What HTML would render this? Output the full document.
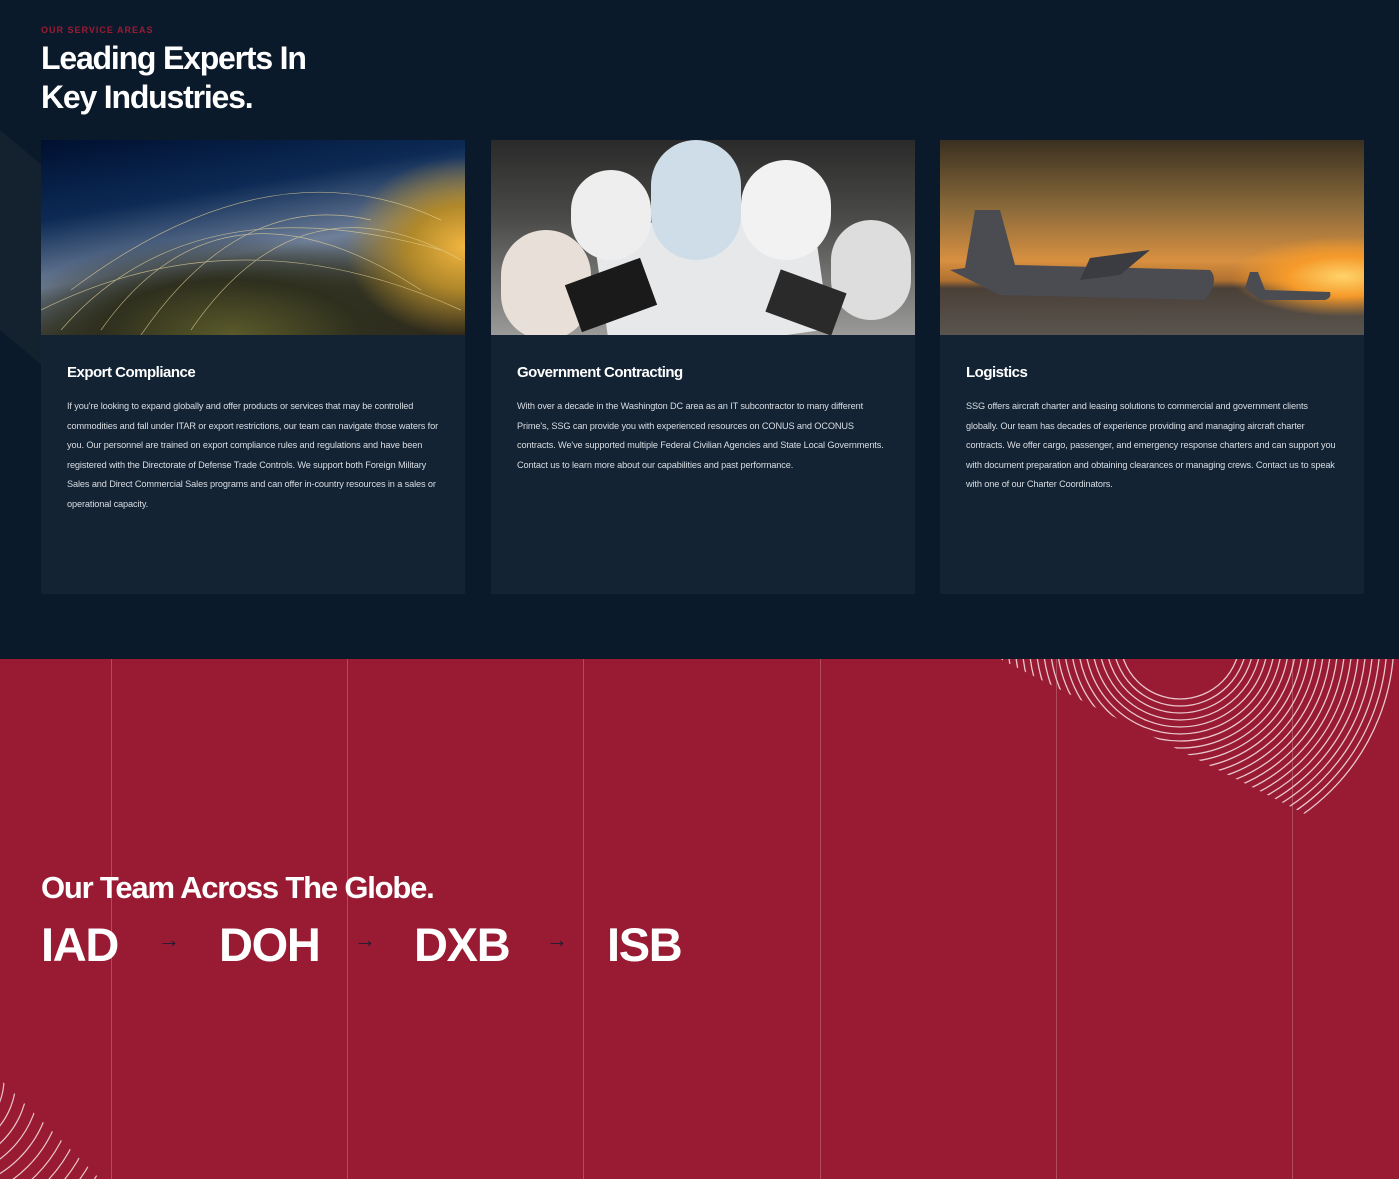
<!DOCTYPE html>
<html><head><meta charset="utf-8"><style>
*{margin:0;padding:0;box-sizing:border-box}
html,body{width:1399px;height:1179px;overflow:hidden}
body{background:#0b1a2b;font-family:"Liberation Sans",sans-serif;position:relative}
.top{position:absolute;left:0;top:0;width:1399px;height:659px;background:#0b1a2b;overflow:hidden}
.tri{position:absolute;left:-60px;top:130px;width:120px;height:200px;background:#15242f;transform:skewY(40deg);opacity:.8}
.eyebrow{position:absolute;left:41px;top:25px;color:#9b1b33;font-size:9px;letter-spacing:1px;font-weight:bold}
h1{position:absolute;left:41px;top:39px;color:#fff;font-size:32px;line-height:39px;font-weight:bold;letter-spacing:-1.2px}
.card{position:absolute;top:140px;width:424px;height:454px;background:#132334}
.img{height:195px;position:relative;overflow:hidden}
.card h3{position:absolute;left:26px;top:224px;color:#fff;font-size:15px;font-weight:bold;letter-spacing:-.5px}
.card p{position:absolute;left:26px;top:257px;width:372px;color:#d9dde3;font-size:9.2px;line-height:19.5px;letter-spacing:-.12px}
.red{position:absolute;left:0;top:659px;width:1399px;height:520px;background:#991b33;overflow:hidden}
.vl{position:absolute;top:0;width:1px;height:520px;background:rgba(255,255,255,.22)}
.h2{position:absolute;left:41px;top:211px;color:#fff;font-size:31px;font-weight:bold;letter-spacing:-1.2px}
.code{position:absolute;top:258px;color:#fff;font-size:47px;font-weight:bold;letter-spacing:-1.3px}
.arr{position:absolute;top:268px;color:#1a1f33;font-size:22px}
</style></head><body>
<div class="top">
<div class="tri"></div>
<div class="eyebrow">OUR SERVICE AREAS</div>
<h1>Leading Experts In<br>Key Industries.</h1>

<div class="card" style="left:41px">
<div class="img" style="background:radial-gradient(ellipse 160px 120px at 100% 55%,#f2b640 0%,#b0882a 35%,transparent 75%),radial-gradient(ellipse 260px 110px at 45% 100%,#5a5a2a 0%,#2e2f1e 50%,transparent 90%),linear-gradient(170deg,#001030 0%,#0c2a55 30%,#6f7f98 55%,#3a3a2a 75%,#2a2418 100%)">
<svg width="424" height="195" style="position:absolute;left:0;top:0"><g fill="none" stroke="#e9d79a" stroke-width=".7" opacity=".7"><path d="M20 190 Q150 40 400 110"/><path d="M60 190 Q180 20 380 150"/><path d="M100 195 Q200 50 330 80"/><path d="M0 170 Q200 70 420 170"/><path d="M150 190 Q260 30 420 120"/><path d="M30 150 Q230 0 400 80"/></g></svg>
</div>
<h3>Export Compliance</h3>
<p>If you're looking to expand globally and offer products or services that may be controlled commodities and fall under ITAR or export restrictions, our team can navigate those waters for you. Our personnel are trained on export compliance rules and regulations and have been registered with the Directorate of Defense Trade Controls. We support both Foreign Military Sales and Direct Commercial Sales programs and can offer in-country resources in a sales or operational capacity.</p>
</div>

<div class="card" style="left:491px">
<div class="img" style="background:linear-gradient(180deg,#2a2a2a 0%,#4a4a48 40%,#9a9a98 100%)">
<div style="position:absolute;left:110px;top:75px;width:220px;height:130px;background:#e6e8ea;transform:rotate(-8deg)"></div>
<div style="position:absolute;left:160px;top:0;width:90px;height:120px;border-radius:45px;background:#cfdde8"></div>
<div style="position:absolute;left:250px;top:20px;width:90px;height:100px;border-radius:45px;background:#f2f2f2"></div>
<div style="position:absolute;left:80px;top:30px;width:80px;height:90px;border-radius:40px;background:#eee"></div>
<div style="position:absolute;left:10px;top:90px;width:90px;height:110px;border-radius:45px;background:#e8e0d8"></div>
<div style="position:absolute;left:340px;top:80px;width:80px;height:100px;border-radius:40px;background:#ddd"></div>
<div style="position:absolute;left:80px;top:130px;width:80px;height:50px;background:#1a1a1a;transform:rotate(-20deg)"></div>
<div style="position:absolute;left:280px;top:140px;width:70px;height:45px;background:#2a2a2a;transform:rotate(20deg)"></div>
</div>
<h3>Government Contracting</h3>
<p>With over a decade in the Washington DC area as an IT subcontractor to many different Prime's, SSG can provide you with experienced resources on CONUS and OCONUS contracts. We've supported multiple Federal Civilian Agencies and State Local Governments. Contact us to learn more about our capabilities and past performance.</p>
</div>

<div class="card" style="left:940px">
<div class="img" style="background:radial-gradient(ellipse 140px 50px at 95% 70%,#ffd36a 0%,#f59a2a 40%,transparent 80%),linear-gradient(180deg,#3a3020 0%,#8a6a3a 35%,#d89040 62%,#b07030 72%,#4a4038 76%,#5a544e 100%)">
<svg width="424" height="195" style="position:absolute;left:0;top:0"><g fill="#4a4c52"><path d="M35 70 L60 70 L75 125 L270 130 Q280 140 265 160 L60 155 L10 130 L25 128 Z"/><path d="M150 118 L210 110 L180 135 L140 140 Z" fill="#3a3c42"/><path d="M310 132 L318 132 L325 150 L390 152 Q392 158 385 160 L320 160 L305 148 Z"/></g></svg>
</div>
<h3>Logistics</h3>
<p>SSG offers aircraft charter and leasing solutions to commercial and government clients globally. Our team has decades of experience providing and managing aircraft charter contracts. We offer cargo, passenger, and emergency response charters and can support you with document preparation and obtaining clearances or managing crews. Contact us to speak with one of our Charter Coordinators.</p>
</div>
</div>

<div class="red">
<div class="vl" style="left:111px"></div><div class="vl" style="left:347px"></div><div class="vl" style="left:583px"></div><div class="vl" style="left:820px"></div><div class="vl" style="left:1056px"></div><div class="vl" style="left:1292px"></div>
<svg width="1399" height="520" style="position:absolute;left:0;top:0">
<defs><clipPath id="c1"><polygon points="1000,0 1399,0 1399,200 1370,188"/></clipPath><clipPath id="c2"><polygon points="0,420 0,520 100,520"/></clipPath></defs>
<g fill="none" stroke="#e8c6cc" stroke-width="1.3" clip-path="url(#c1)" id="arcs"></g>
<g fill="none" stroke="#e8c6cc" stroke-width="1.2" clip-path="url(#c2)">
<circle cx="-60" cy="420" r="40"/><circle cx="-60" cy="420" r="52"/><circle cx="-60" cy="420" r="64"/><circle cx="-60" cy="420" r="76"/><circle cx="-60" cy="420" r="88"/><circle cx="-60" cy="420" r="100"/><circle cx="-60" cy="420" r="112"/><circle cx="-60" cy="420" r="124"/><circle cx="-60" cy="420" r="136"/><circle cx="-60" cy="420" r="148"/><circle cx="-60" cy="420" r="160"/><circle cx="-60" cy="420" r="172"/><circle cx="-60" cy="420" r="184"/>
</g></svg>
<div class="h2">Our Team Across The Globe.</div>
<div class="code" style="left:41px">IAD</div>
<div class="arr" style="left:158px">→</div>
<div class="code" style="left:219px">DOH</div>
<div class="arr" style="left:354px">→</div>
<div class="code" style="left:414px">DXB</div>
<div class="arr" style="left:546px">→</div>
<div class="code" style="left:607px">ISB</div>
</div>
<script>
var g=document.getElementById('arcs'),s='';
for(var r=60;r<=220;r+=7){s+='<circle cx="1180" cy="-20" r="'+r+'"/>';}
g.innerHTML=s;
</script>
</body></html>
